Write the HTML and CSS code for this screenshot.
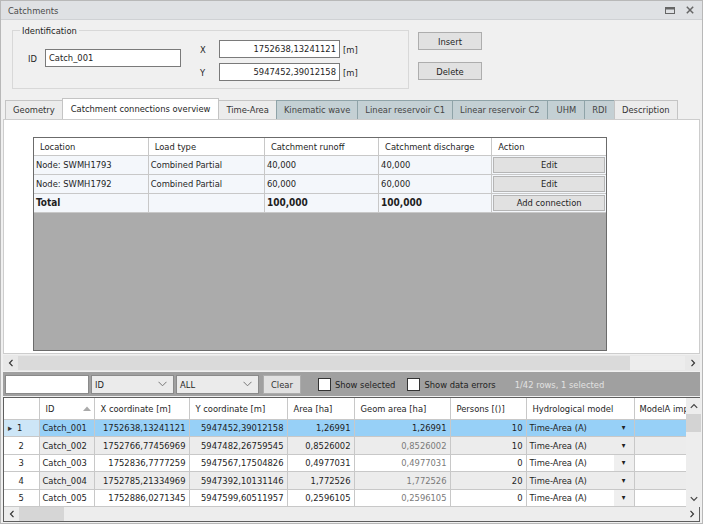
FILE: index.html
```html
<!DOCTYPE html>
<html>
<head>
<meta charset="utf-8">
<link rel="stylesheet" href="styles.css">
</head>
<body>
<div class="window">
  <div class="titlebar">
    <span class="title">Catchments</span>
    <span class="tb-icons">
      <svg width="10" height="7" viewBox="0 0 10 7"><rect x="0.5" y="0.5" width="9" height="6" fill="none" stroke="#666" stroke-width="1"/><rect x="0.5" y="0.5" width="9" height="2" fill="#666"/></svg>
      <svg width="8" height="8" viewBox="0 0 8 8"><path d="M0.8 0.8L7.2 7.2M7.2 0.8L0.8 7.2" stroke="#666" stroke-width="1.5"/></svg>
    </span>
  </div>
  <div class="top">
    <fieldset class="group">
      <legend>Identification</legend>
      <div class="id-row">
        <label class="lbl-id">ID</label>
        <div class="input id-input">Catch_001</div>
      </div>
      <div class="coords">
        <div class="coord-row"><label class="lbl-xy">X</label><div class="input num">1752638,13241121</div><span class="unit">[m]</span></div>
        <div class="coord-row"><label class="lbl-xy">Y</label><div class="input num">5947452,39012158</div><span class="unit">[m]</span></div>
      </div>
    </fieldset>
    <div class="actions">
      <button class="btn">Insert</button>
      <button class="btn">Delete</button>
    </div>
  </div>
  <div class="tabs">
    <div class="tab">Geometry</div>
    <div class="tab active">Catchment connections overview</div>
    <div class="tab">Time-Area</div>
    <div class="tab alt">Kinematic wave</div>
    <div class="tab alt">Linear reservoir C1</div>
    <div class="tab alt">Linear reservoir C2</div>
    <div class="tab alt wide">UHM</div>
    <div class="tab alt">RDI</div>
    <div class="tab">Description</div>
  </div>
  <div class="panel">
    <div class="conn">
      <table class="conn-table">
        <colgroup><col class="c114"><col class="c116"><col class="c114"><col class="c113"><col class="c114"></colgroup>
        <tr class="hdr"><td class="pad">Location</td><td class="pad">Load type</td><td class="pad">Catchment runoff</td><td class="pad">Catchment discharge</td><td class="pad">Action</td></tr>
        <tr><td>Node: SWMH1793</td><td>Combined Partial</td><td>40,000</td><td>40,000</td><td class="act"><div class="cbtn">Edit</div></td></tr>
        <tr><td>Node: SWMH1792</td><td>Combined Partial</td><td>60,000</td><td>60,000</td><td class="act"><div class="cbtn">Edit</div></td></tr>
        <tr class="total"><td>Total</td><td></td><td>100,000</td><td>100,000</td><td class="act"><div class="cbtn">Add connection</div></td></tr>
      </table>
      <div class="conn-empty"></div>
    </div>
  </div>
  <div class="hscroll">
    <span class="arr"><svg width="6" height="8" viewBox="0 0 6 8"><path d="M4.5 0.8L1.5 4L4.5 7.2" fill="none" stroke="#333" stroke-width="1.2"/></svg></span>
    <div class="track"><div class="thumb"></div></div>
    <span class="arr"><svg width="6" height="8" viewBox="0 0 6 8"><path d="M1.5 0.8L4.5 4L1.5 7.2" fill="none" stroke="#333" stroke-width="1.2"/></svg></span>
  </div>
  <div class="filter">
    <div class="finput"></div>
    <div class="combo">ID<svg width="9" height="6" viewBox="0 0 9 6"><path d="M0.5 0.8L4.5 4.8L8.5 0.8" fill="none" stroke="#777" stroke-width="1"/></svg></div>
    <div class="combo">ALL<svg width="9" height="6" viewBox="0 0 9 6"><path d="M0.5 0.8L4.5 4.8L8.5 0.8" fill="none" stroke="#777" stroke-width="1"/></svg></div>
    <div class="fbtn">Clear</div>
    <label class="chk"><span class="box"></span>Show selected</label>
    <label class="chk"><span class="box"></span>Show data errors</label>
    <span class="status">1/42 rows, 1 selected</span>
  </div>
  <div class="grid">
    <div class="grid-main">
      <table class="data">
        <colgroup><col class="w35"><col class="w55"><col class="w95"><col class="w98"><col class="w67"><col class="w96"><col class="w76"><col class="w108"><col class="w52"></colgroup>
        <tr class="ghdr"><th></th><th class="sort">ID<svg width="8" height="5" viewBox="0 0 8 5"><path d="M0 5L4 0.5L8 5Z" fill="#aaa"/></svg></th><th>X coordinate [m]</th><th>Y coordinate [m]</th><th>Area [ha]</th><th>Geom area [ha]</th><th>Persons [()]</th><th>Hydrological model</th><th class="clip">ModelA imp</th></tr>
        <tr class="sel"><td class="ind"><span class="tri">&#9656;</span>1</td><td>Catch_001</td><td class="r">1752638,13241121</td><td class="r">5947452,39012158</td><td class="r">1,26991</td><td class="r">1,26991</td><td class="r">10</td><td class="model">Time-Area (A)<span class="dd">&#9662;</span></td><td></td></tr>
        <tr class="alt"><td class="ind">2</td><td>Catch_002</td><td class="r">1752766,77456969</td><td class="r">5947482,26759545</td><td class="r">0,8526002</td><td class="r g">0,8526002</td><td class="r">10</td><td class="model">Time-Area (A)<span class="dd">&#9662;</span></td><td></td></tr>
        <tr><td class="ind">3</td><td>Catch_003</td><td class="r">1752836,7777259</td><td class="r">5947567,17504826</td><td class="r">0,4977031</td><td class="r g">0,4977031</td><td class="r">0</td><td class="model">Time-Area (A)<span class="dd">&#9662;</span></td><td></td></tr>
        <tr class="alt"><td class="ind">4</td><td>Catch_004</td><td class="r">1752785,21334969</td><td class="r">5947392,10131146</td><td class="r">1,772526</td><td class="r g">1,772526</td><td class="r">20</td><td class="model">Time-Area (A)<span class="dd">&#9662;</span></td><td></td></tr>
        <tr><td class="ind">5</td><td>Catch_005</td><td class="r">1752886,0271345</td><td class="r">5947599,60511957</td><td class="r">0,2596105</td><td class="r g">0,2596105</td><td class="r">0</td><td class="model">Time-Area (A)<span class="dd">&#9662;</span></td><td></td></tr>
      </table>
      <div class="vscroll">
        <svg width="8" height="6" viewBox="0 0 8 6"><path d="M0.8 4.8L4 1.5L7.2 4.8" fill="none" stroke="#444" stroke-width="1.2"/></svg>
        <div class="vthumb"></div>
        <div class="vspace"></div>
        <svg width="8" height="6" viewBox="0 0 8 6"><path d="M0.8 1.2L4 4.5L7.2 1.2" fill="none" stroke="#444" stroke-width="1.2"/></svg>
      </div>
    </div>
    <div class="ghscroll">
      <span class="arr"><svg width="6" height="8" viewBox="0 0 6 8"><path d="M4.5 0.8L1.5 4L4.5 7.2" fill="none" stroke="#333" stroke-width="1.2"/></svg></span>
      <div class="gtrack"><div class="gthumb"></div></div>
      <span class="arr"><svg width="6" height="8" viewBox="0 0 6 8"><path d="M1.5 0.8L4.5 4L1.5 7.2" fill="none" stroke="#333" stroke-width="1.2"/></svg></span>
    </div>
  </div>
</div>
</body>
</html>
```
FILE: styles.css
```css
* { box-sizing: border-box; }
html, body { margin: 0; padding: 0; background: #f0f0f0; }
body { font-family: "DejaVu Sans Condensed", "DejaVu Sans", sans-serif; font-size: 9.3px; color: #1e1e1e; }
.window { width: 703px; height: 524px; border: 1px solid #b8b8b8; background: #f0f0f0; display: flex; flex-direction: column; overflow: hidden; }
.titlebar { height: 19px; flex: none; background: #dfe1e4; border-bottom: 1px solid #cfd1d4; display: flex; align-items: center; justify-content: space-between; padding: 0 8px 0 7px; }
.title { color: #4a4a4a; }
.tb-icons { display: flex; gap: 11px; align-items: center; }
.top { height: 78px; flex: none; display: flex; align-items: flex-start; padding: 5px 0 0 11px; }
.group { margin: 0; padding: 0 0 0 15px; border: 1px solid #d8d8d8; width: 397px; height: 64px; display: flex; align-items: flex-start; }
.group legend { padding: 0 2px; margin-left: -8px; color: #1e1e1e; }
.id-row { display: flex; align-items: center; margin-top: 13px; }
.lbl-id { width: 17px; }
.input { height: 18px; background: #fff; border: 1px solid #7a7a7a; padding: 0 3px; line-height: 16px; }
.id-input { width: 136px; }
.coords { margin-left: 19px; display: flex; flex-direction: column; gap: 5px; margin-top: 4px; }
.coord-row { display: flex; align-items: center; }
.lbl-xy { width: 19px; }
.num { width: 121px; text-align: right; }
.unit { margin-left: 3px; }
.actions { display: flex; flex-direction: column; gap: 12px; margin-left: 9px; margin-top: 7px; }
.btn { width: 64px; height: 18px; font: inherit; color: #1e1e1e; background: #e1e1e1; border: 1px solid #adadad; padding: 0; }
.tabs { height: 21px; flex: none; display: flex; align-items: flex-end; padding-left: 4px; }
.tab { height: 19px; padding: 0 7px; line-height: 18px; border: 1px solid #c4c4c4; border-bottom: none; background: #ececec; color: #333; margin-right: -1px; white-space: nowrap; }
.tab.alt { background: #c4d0d4; border-color: #8fa3a8; color: #444; }
.tab.wide { padding: 0 8px 0 9px; }
.tab.active { height: 21px; background: #fff; border-color: #c4c4c4; color: #1e1e1e; padding: 0 8px; line-height: 20px; position: relative; z-index: 1; }
.panel { height: 235px; flex: none; margin: 0 2px; background: #fff; border: 1px solid #cdcdcd; padding: 17px 0 0 29px; }
.conn { width: 574px; height: 214px; border: 1px solid #6b6b6b; display: flex; flex-direction: column; background: #ababab; }
.conn-table { border-collapse: collapse; table-layout: fixed; width: 572px; background: #fff; }
.c114 { width: 114px; } .c116 { width: 116px; } .c113 { width: 113px; }
.conn-table td { height: 19px; border: 1px solid #c8c8c8; padding: 0 2px; white-space: nowrap; overflow: hidden; }
.conn-table tr:first-child td { border-top: none; height: 17px; }
.conn-table td:first-child { border-left: none; }
.conn-table td:last-child { border-right: none; }
.conn-table tr:not(.hdr) td { background: #f4f7fb; }
.conn-table td.pad { padding-left: 6px; }
.conn-table tr.total td { font-weight: bold; font-size: 10px; }
.conn-table td.act { padding: 1px 1px; }
.cbtn { height: 16px; line-height: 14px; background: #e1e1e1; border: 1px solid #b5b5b5; text-align: center; font-weight: normal; font-size: 9.3px; }
.conn-empty { flex: 1; }
.hscroll { height: 16px; flex: none; margin: 1px 2px 0; display: flex; align-items: center; background: #e8e8e8; }
.arr { width: 15px; display: flex; align-items: center; justify-content: center; }
.track { flex: 1; height: 14px; background: #ededed; }
.thumb { width: 612px; height: 14px; background: #dadada; }
.filter { height: 24px; flex: none; margin: 1px 2px 0; background: #a0a0a0; display: flex; align-items: center; padding-left: 2px; }
.finput { width: 84px; height: 19px; background: #fff; border: 1px solid #8a8a8a; }
.combo { width: 83px; height: 19px; margin-left: 2px; background: #ebebeb; border: 1px solid #8a8a8a; display: flex; align-items: center; justify-content: space-between; padding: 0 6px 0 3px; }
.fbtn { height: 19px; margin-left: 4px; padding: 0 7px; line-height: 17px; background: #e1e1e1; border: 1px solid #adadad; color: #333; }
.chk { display: flex; align-items: center; margin-left: 17px; color: #222; }
.chk + .chk { margin-left: 12px; }
.box { width: 13px; height: 13px; background: #fff; border: 1px solid #333; margin-right: 4px; }
.status { margin-left: 19px; color: #e2e2e2; }
.grid { flex: 1; margin: 1px 2px 2px; border: 1px solid #5e5e5e; background: #fff; display: flex; flex-direction: column; }
.grid-main { flex: 1; display: flex; }
.data { border-collapse: collapse; table-layout: fixed; width: 682px; align-self: flex-start; }
.w35 { width: 35px; } .w55 { width: 55px; } .w95 { width: 95px; } .w98 { width: 98px; } .w67 { width: 67px; } .w96 { width: 96px; } .w76 { width: 76px; } .w108 { width: 108px; } .w52 { width: 52px; }
.data th, .data td { height: 17px; padding: 0 3px; border: 1px solid #c8c8c8; white-space: nowrap; overflow: hidden; font-weight: normal; text-align: left; }
.data tr.alt td { height: 18px; }
.data tr > :first-child { border-left: none; }
.data tr > :last-child { border-right: none; }
.data th { height: 21px; border-top: none; padding-left: 6px; background: #fff; }
.data th.sort svg { margin-left: 29px; vertical-align: 1px; }
.data th.clip { text-overflow: clip; padding-left: 5px; }
.data td { background: #fff; }
.data tr.alt td { background: #ececec; }
.data td.r { text-align: right; }
.data td.g { color: #7a7a7a; }
.data td.ind { text-align: center; background: #fff; padding: 0; }
.data tr.alt td.ind { background: #fff; }
.data tr.sel td { background: #97d0f7; }
.data tr.sel td.ind { background: #cde6f7; text-align: left; padding-left: 4px; }
.tri { font-size: 9px; color: #333; margin-right: 5px; }
.data td.model { position: relative; padding-right: 22px; }
.dd { position: absolute; right: 0; top: 0; width: 20px; height: 100%; display: flex; align-items: center; justify-content: center; font-size: 8px; color: #222; }
.data tr td.model .dd { background: #efefef; }
.data tr.alt td.model .dd { background: #ececec; }
.data tr.sel td.model .dd { background: #97d0f7; }
.vscroll { width: 15px; flex: none; background: #ededed; display: flex; flex-direction: column; align-items: center; padding-top: 5px; }
.vthumb { width: 15px; height: 18px; background: #d3d3d3; margin-top: 5px; }
.vspace { flex: 1; }
.vscroll svg:last-child { margin-bottom: 5px; }
.ghscroll { height: 14px; flex: none; display: flex; align-items: center; background: #ededed; }
.gtrack { flex: 1; height: 14px; }
.gthumb { width: 45px; height: 14px; background: #d6d6d6; }
```
